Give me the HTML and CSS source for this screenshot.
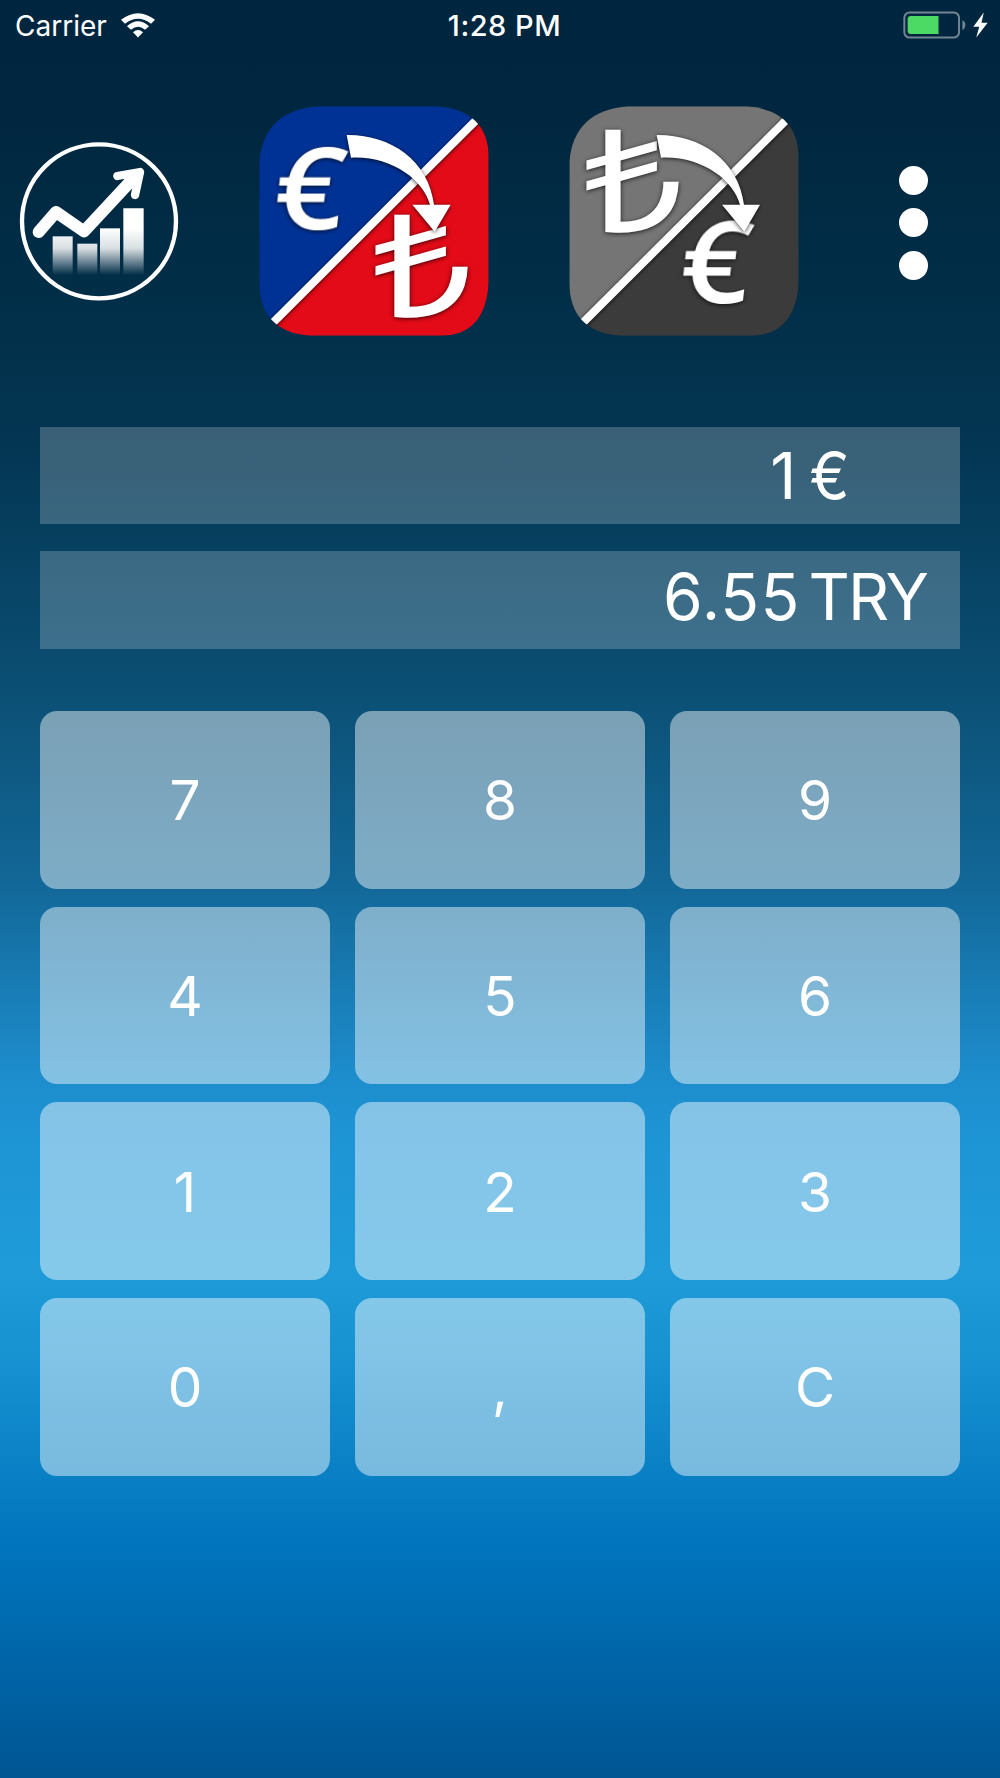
FILE: index.html
```html
<!DOCTYPE html>
<html lang="en">
<head>
    <meta charset="UTF-8">
    <meta name="viewport" content="width=device-width, initial-scale=1.0">
    <title>Currency Converter</title>
    <link rel="stylesheet" href="styles.css">
</head>
<body>
    <!-- Status Bar -->
    <div class="status-bar">
        <div class="status-left">
            <span class="carrier">Carrier</span>
            <svg class="wifi" viewBox="0 0 102 74">
                <path d="M0 20 Q51 -20 102 20 L90 32 Q51 2 12 32Z"/>
                <path d="M18 39 Q51 10 84 39 L72 50 Q51 32 30 50Z"/>
                <path d="M36 57 Q51 44 66 57 L51 73Z"/>
            </svg>
        </div>
        <span class="time">1:28 PM</span>
        <div class="status-right">
            <svg class="battery" viewBox="0 0 190 84">
                <rect x="4" y="4" width="165" height="76" rx="16" fill="none" stroke="#728591" stroke-width="6"/>
                <path d="M24 15 H107 V69 H24 Q14 69 14 59 V25 Q14 15 24 15Z" fill="#4cd964"/>
                <path d="M179 28 Q188 32 188 42 Q188 53 179 57Z" fill="#728591"/>
            </svg>
            <svg class="bolt" viewBox="0 0 46 76">
                <path d="M33 0 L1 43 H19 L10 76 L45 31 H26Z"/>
            </svg>
        </div>
    </div>

    <!-- Toolbar -->
    <div class="toolbar">
        <button class="tool-btn" aria-label="Chart">
            <svg class="chart" viewBox="0 0 540 540">
                <defs>
                    <linearGradient id="bar-fade" gradientUnits="userSpaceOnUse" x1="0" y1="235" x2="0" y2="435">
                        <stop offset="0.3" stop-color="#fff"/>
                        <stop offset="0.6" stop-color="#fff" stop-opacity="0.85"/>
                        <stop offset="1" stop-color="#fff" stop-opacity="0"/>
                    </linearGradient>
                </defs>
                <circle cx="267" cy="274" r="231" fill="none" stroke="#fff" stroke-width="13"/>
                <g fill="url(#bar-fade)">
                    <path d="M128 319h60v116h-60z"/>
                    <path d="M202 341h60v94h-60z"/>
                    <path d="M270 295h60v140h-60z"/>
                    <path d="M340 235h61v200h-61z"/>
                </g>
                <path d="M86 306 L138 246 L222 304 L372 143" fill="none" stroke="#fff" stroke-width="36" stroke-linecap="round" stroke-linejoin="round"/>
                <path d="M322 138 L390 126 L375 195" fill="none" stroke="#fff" stroke-width="25" stroke-linecap="round" stroke-linejoin="round"/>
                <path d="M340 145 L392 122 L370 175Z" fill="#fff"/>
            </svg>
        </button>
        <button class="tool-btn" aria-label="Euro to lira">
            <svg class="convert" viewBox="0 0 750 750">
                <defs>
                    <clipPath id="tile">
                        <path d="M205 34 H560 Q716 46 716 190 V560 Q708 722 570 722 H180 Q28 710 28 560 V200 Q42 46 205 34Z"/>
                    </clipPath>
                </defs>
                <g clip-path="url(#tile)">
                    <path d="M0 0H750L0 750Z" fill="#003296"/>
                    <path d="M750 0V750H0Z" fill="#e30b17"/>
                    <path class="shadow" d="M60 692 L690 64" stroke="#fff" stroke-width="24"/>
                </g>
                <text class="euro shadow" transform="translate(62 403) scale(1.08 1) skewX(-6)">€</text>
                <text class="lira shadow" transform="translate(366 666) scale(1.23 1)">₺</text>
                <path class="shadow" d="M290 120 C420 118 535 195 552 329 H602 L554 410 L487 329 H540 C520 255 425 182 303 188Z" fill="#fff"/>
            </svg>
        </button>
        <button class="tool-btn" aria-label="Lira to euro">
            <svg class="convert" viewBox="0 0 750 750">
                <g clip-path="url(#tile)">
                    <path d="M0 0H750L0 750Z" fill="#757575"/>
                    <path d="M750 0V750H0Z" fill="#3b3b3b"/>
                    <path class="shadow" d="M60 692 L690 64" stroke="#fff" stroke-width="24"/>
                </g>
                <text class="lira shadow" transform="translate(68 411) scale(1.23 1)">₺</text>
                <text class="euro shadow" transform="translate(350 624) scale(1.08 1) skewX(-6)">€</text>
                <path class="shadow" d="M290 120 C420 118 535 195 552 329 H600 L553 410 L486 329 H540 C520 255 425 182 303 188Z" fill="#fff"/>
            </svg>
        </button>
        <button class="tool-btn menu" aria-label="Menu">
            <span class="dot"></span>
            <span class="dot"></span>
            <span class="dot"></span>
        </button>
    </div>

    <!-- Amounts -->
    <div class="amounts">
        <div class="amount from">
            <span class="value">1</span>
            <span class="currency">€</span>
        </div>
        <div class="amount to">
            <span class="value">6.55</span>
            <span class="currency">TRY</span>
        </div>
    </div>

    <!-- Keypad -->
    <div class="keypad">
        <button class="key">7</button>
        <button class="key">8</button>
        <button class="key">9</button>
        <button class="key">4</button>
        <button class="key">5</button>
        <button class="key">6</button>
        <button class="key">1</button>
        <button class="key">2</button>
        <button class="key">3</button>
        <button class="key">0</button>
        <button class="key">,</button>
        <button class="key">C</button>
    </div>
</body>
</html>
```
FILE: styles.css
```css
* {
    box-sizing: border-box;
    margin: 0;
    padding: 0;
    font-family: 'Inter', 'Liberation Sans', sans-serif;
}

body {
    height: 1778px;
    color: white;
    background: linear-gradient(
        #00263f 0px,
        #00273f 120px,
        #02304a 340px,
        #043856 470px,
        #0b4f74 690px,
        #126797 880px,
        #1d8ccb 1070px,
        #1e94d5 1130px,
        #1f9bd9 1270px,
        #1893d2 1350px,
        #0074bd 1550px,
        #005592 1778px
    );
}

button {
    border: none;
    background: none;
    color: white;
    cursor: pointer;
}

.status-bar {
    display: grid;
    grid-template-columns: 1fr auto 1fr;
    align-items: center;
    height: 50px;
    padding: 0 12px 0 15px;
}

.status-left, .status-right {
    display: flex;
    align-items: center;
}

.status-left {
    gap: 14px;
}

.status-right {
    justify-content: flex-end;
    gap: 7px;
}

.carrier {
    font-size: 28px;
    padding-top: 1px;
}

.time {
    font-size: 29px;
    font-weight: 500;
    letter-spacing: 0.5px;
    padding: 1px 0 0 6px;
}

.wifi {
    width: 34px;
    height: 25px;
    fill: white;
}

.battery {
    width: 63px;
    height: 28px;
}

.bolt {
    width: 15px;
    height: 26px;
    fill: white;
}

.toolbar {
    display: flex;
    align-items: center;
    gap: 60px;
    height: 340px;
    padding-left: 10px;
}

.chart {
    display: block;
    width: 180px;
    height: 180px;
}

.convert {
    display: block;
    width: 250px;
    height: 250px;
    overflow: visible;
}

.euro {
    fill: white;
    font-family: 'Open Sans', sans-serif;
    font-size: 342px;
    font-weight: 600;
}

.lira {
    fill: white;
    font-family: 'Liberation Sans', sans-serif;
    font-size: 430px;
}

.shadow {
    filter: drop-shadow(0 3px 7px rgba(0, 0, 0, 0.75));
}

.menu {
    display: flex;
    flex-direction: column;
    gap: 13.5px;
    margin-left: 29px;
    padding-top: 5px;
}

.dot {
    width: 29px;
    height: 29px;
    border-radius: 50%;
    background: white;
}

.amounts {
    display: flex;
    flex-direction: column;
    gap: 27px;
    padding: 37px 40px 0;
}

.amount {
    display: flex;
    justify-content: flex-end;
    height: 97px;
    background: rgba(255, 255, 255, 0.21);
    font-size: 64px;
    line-height: 97px;
}

.from {
    padding-right: 110px;
    gap: 11px;
}

.from .currency {
    transform: scaleX(0.94);
    transform-origin: right;
}

.to {
    height: 98px;
    padding-right: 33px;
    gap: 8px;
    line-height: 92px;
}

.to .value {
    letter-spacing: 1.2px;
}

.to .currency {
    letter-spacing: -2px;
}

.keypad {
    display: grid;
    grid-template-columns: repeat(3, 1fr);
    grid-template-rows: repeat(4, 177.7px);
    gap: 18px 25px;
    padding: 62px 40px 0;
}

.key {
    padding-top: 2px;
    border-radius: 17px;
    background: rgba(255, 255, 255, 0.455);
    font-size: 55px;
    line-height: 175px;
}
```
